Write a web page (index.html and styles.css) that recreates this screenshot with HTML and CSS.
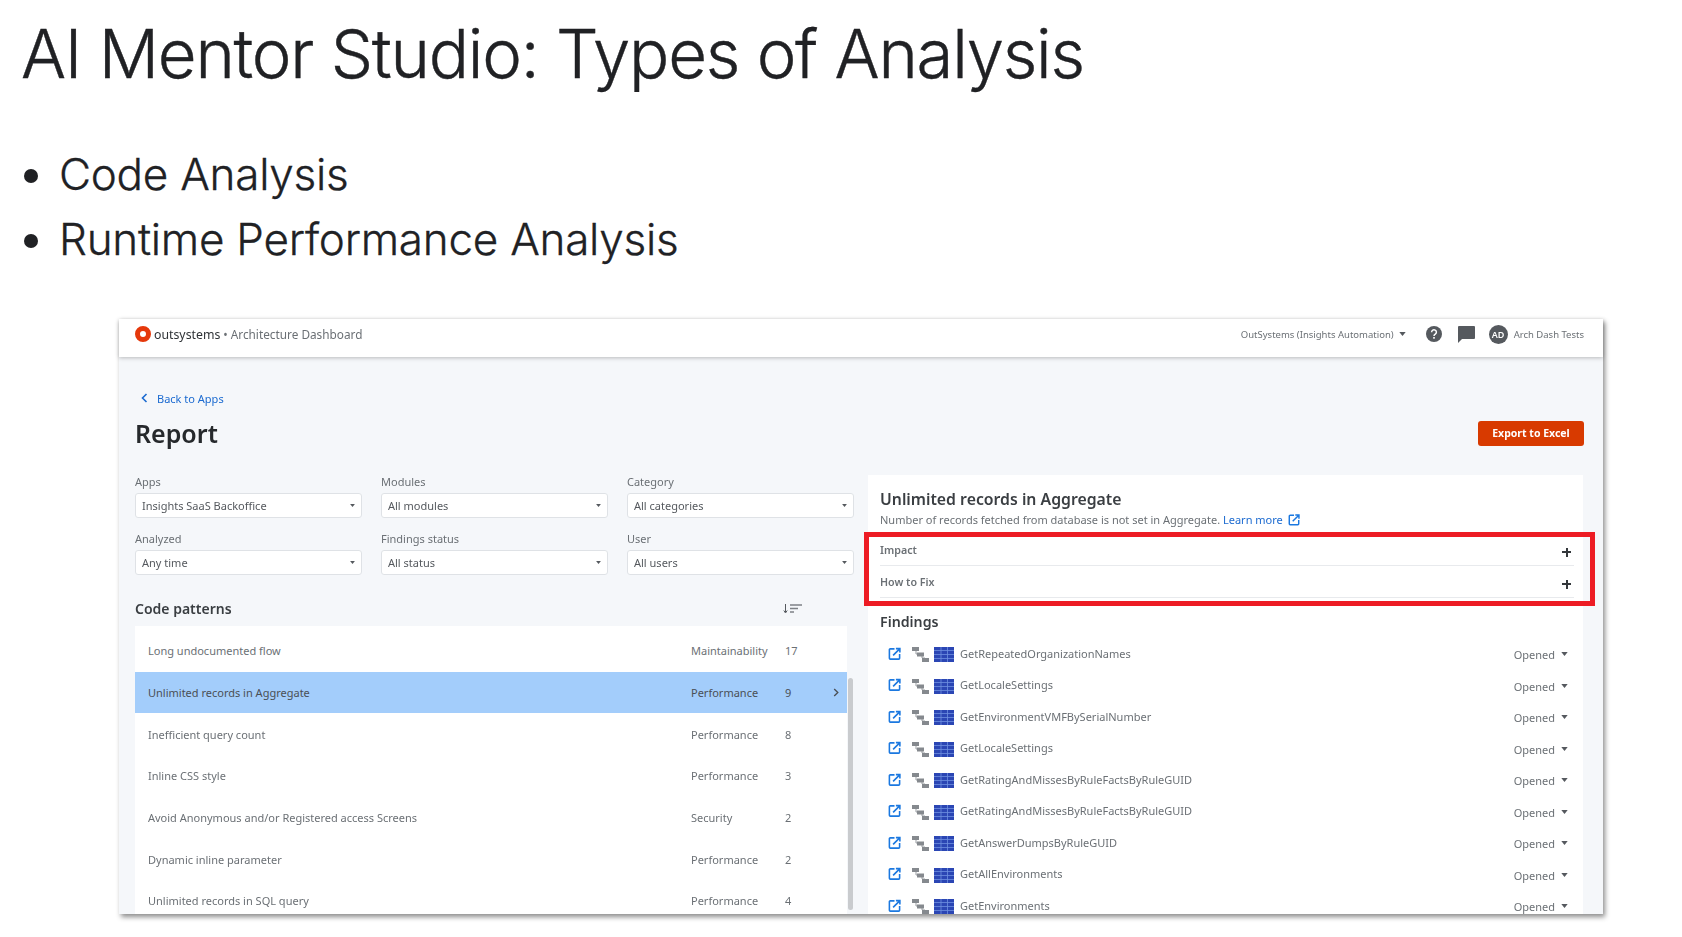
FILE: index.html
```html
<!DOCTYPE html>
<html lang="en">
<head>
  <meta charset="UTF-8">
  <title>AI Mentor Studio: Types of Analysis</title>
  <link rel="stylesheet" href="styles.css">
</head>
<body>

  <svg class="sprite" width="0" height="0">
    <symbol id="ext" viewBox="0 0 14 14">
      <path d="M7 1.500H2.500a1 1 0 0 0-1 1v9a1 1 0 0 0 1 1h9a1 1 0 0 0 1-1V7" fill="none" stroke="currentColor" stroke-width="1.700"/>
      <path d="M5.500 8.500 12 2M8.500 1.200h4.300v4.300" fill="none" stroke="currentColor" stroke-width="1.700"/>
    </symbol>
    <symbol id="tree" viewBox="0 0 17 15">
      <path d="M4 4v3h5M10 8v3h3" fill="none" stroke="#9a9ea3" stroke-width="1"/>
      <rect x="0" y="0" width="7" height="4" fill="#85898e"/>
      <rect x="5" y="5.500" width="7" height="4" fill="#85898e"/>
      <rect x="10" y="11" width="7" height="4" fill="#85898e"/>
    </symbol>
    <symbol id="table" viewBox="0 0 20 15">
      <rect width="20" height="15" fill="#2b46b4"/>
      <path d="M0 3.500h20M0 7.500h20M0 11.500h20M7 0v15M13.500 0v15" stroke="#6f8fe0" stroke-width="0.800"/>
    </symbol>
    <symbol id="caret" viewBox="0 0 8 5">
      <path d="M0 0h8L4 5z" fill="currentColor"/>
    </symbol>
  </svg>

  <header class="slide-head">
    <h1>AI Mentor Studio: Types of Analysis</h1>
    <ul>
      <li>Code Analysis</li>
      <li>Runtime Performance Analysis</li>
    </ul>
  </header>

  <section class="app">
    <div class="topbar">
      <div class="brand">
        <span class="brand-logo"></span>
        <span class="brand-name">outsystems</span>
        <span class="brand-sep">•</span>
        <span class="brand-title">Architecture Dashboard</span>
      </div>
      <div class="account">
        <span class="tenant">OutSystems (Insights Automation)</span>
        <svg class="tenant-caret"><use href="#caret"/></svg>
        <svg class="help" viewBox="0 0 16 16">
          <circle cx="8" cy="8" r="8" fill="#55595e"/>
          <path d="M5.600 6.200a2.400 2.400 0 1 1 3.700 2c-.8.500-1.300.9-1.300 1.800" fill="none" stroke="#fff" stroke-width="1.500"/>
          <rect x="7.200" y="11" width="1.600" height="1.700" fill="#fff"/>
        </svg>
        <svg class="chat" viewBox="0 0 17 17">
          <path d="M1 0h15a1 1 0 0 1 1 1v11a1 1 0 0 1-1 1H4l-4 4V1a1 1 0 0 1 1-1z" fill="#55595e"/>
        </svg>
        <span class="avatar">AD</span>
        <span class="user">Arch Dash Tests</span>
      </div>
    </div>

    <div class="content">
      <a class="back" href="#">
        <svg viewBox="0 0 7 10"><path d="M5.500 1 1.500 5l4 4" fill="none" stroke="currentColor" stroke-width="1.600"/></svg>
        Back to Apps
      </a>
      <div class="title-row">
        <h2>Report</h2>
        <button class="export" type="button">Export to Excel</button>
      </div>

      <div class="columns">
        <div class="left">
          <div class="filters">
            <div class="filter"><label>Apps</label><div class="select">Insights SaaS Backoffice<svg><use href="#caret"/></svg></div></div>
            <div class="filter"><label>Modules</label><div class="select">All modules<svg><use href="#caret"/></svg></div></div>
            <div class="filter"><label>Category</label><div class="select">All categories<svg><use href="#caret"/></svg></div></div>
            <div class="filter"><label>Analyzed</label><div class="select">Any time<svg><use href="#caret"/></svg></div></div>
            <div class="filter"><label>Findings status</label><div class="select">All status<svg><use href="#caret"/></svg></div></div>
            <div class="filter"><label>User</label><div class="select">All users<svg><use href="#caret"/></svg></div></div>
          </div>

          <div class="patterns-head">
            <h3>Code patterns</h3>
            <svg class="sort" viewBox="0 0 20 10">
              <path d="M2.500 0v8M.8 6.500 2.500 9l1.700-2.500" fill="none" stroke="#55595e" stroke-width="1"/>
              <path d="M7 1h12M7 4.500h8M7 8h4" stroke="#7d8186" stroke-width="1.400"/>
            </svg>
          </div>

          <div class="patterns">
            <div class="pattern-list">
              <div class="pattern"><span class="pattern-name">Long undocumented flow</span><span class="pattern-cat">Maintainability</span><span class="pattern-num">17</span></div>
              <div class="pattern active"><span class="pattern-name">Unlimited records in Aggregate</span><span class="pattern-cat">Performance</span><span class="pattern-num">9</span><svg viewBox="0 0 6 10"><path d="M1 1l4 4-4 4" fill="none" stroke="currentColor" stroke-width="1.500"/></svg></div>
              <div class="pattern"><span class="pattern-name">Inefficient query count</span><span class="pattern-cat">Performance</span><span class="pattern-num">8</span></div>
              <div class="pattern"><span class="pattern-name">Inline CSS style</span><span class="pattern-cat">Performance</span><span class="pattern-num">3</span></div>
              <div class="pattern"><span class="pattern-name">Avoid Anonymous and/or Registered access Screens</span><span class="pattern-cat">Security</span><span class="pattern-num">2</span></div>
              <div class="pattern"><span class="pattern-name">Dynamic inline parameter</span><span class="pattern-cat">Performance</span><span class="pattern-num">2</span></div>
              <div class="pattern"><span class="pattern-name">Unlimited records in SQL query</span><span class="pattern-cat">Performance</span><span class="pattern-num">4</span></div>
            </div>
            <div class="scrollbar"></div>
          </div>
        </div>

        <div class="card">
          <h3>Unlimited records in Aggregate</h3>
          <p class="card-sub">Number of records fetched from database is not set in Aggregate. <a href="#">Learn more</a><svg class="learn-icon"><use href="#ext"/></svg></p>

          <div class="accordion">
            <div class="accordion-row"><span>Impact</span><b class="plus"></b></div>
            <div class="accordion-row"><span>How to Fix</span><b class="plus"></b></div>
          </div>

          <h3 class="findings-title">Findings</h3>
          <div class="finding"><svg class="f-ext"><use href="#ext"/></svg><svg class="f-tree"><use href="#tree"/></svg><svg class="f-table"><use href="#table"/></svg><span class="f-name">GetRepeatedOrganizationNames</span><span class="f-status">Opened</span><svg class="f-caret"><use href="#caret"/></svg></div>
          <div class="finding"><svg class="f-ext"><use href="#ext"/></svg><svg class="f-tree"><use href="#tree"/></svg><svg class="f-table"><use href="#table"/></svg><span class="f-name">GetLocaleSettings</span><span class="f-status">Opened</span><svg class="f-caret"><use href="#caret"/></svg></div>
          <div class="finding"><svg class="f-ext"><use href="#ext"/></svg><svg class="f-tree"><use href="#tree"/></svg><svg class="f-table"><use href="#table"/></svg><span class="f-name">GetEnvironmentVMFBySerialNumber</span><span class="f-status">Opened</span><svg class="f-caret"><use href="#caret"/></svg></div>
          <div class="finding"><svg class="f-ext"><use href="#ext"/></svg><svg class="f-tree"><use href="#tree"/></svg><svg class="f-table"><use href="#table"/></svg><span class="f-name">GetLocaleSettings</span><span class="f-status">Opened</span><svg class="f-caret"><use href="#caret"/></svg></div>
          <div class="finding"><svg class="f-ext"><use href="#ext"/></svg><svg class="f-tree"><use href="#tree"/></svg><svg class="f-table"><use href="#table"/></svg><span class="f-name">GetRatingAndMissesByRuleFactsByRuleGUID</span><span class="f-status">Opened</span><svg class="f-caret"><use href="#caret"/></svg></div>
          <div class="finding"><svg class="f-ext"><use href="#ext"/></svg><svg class="f-tree"><use href="#tree"/></svg><svg class="f-table"><use href="#table"/></svg><span class="f-name">GetRatingAndMissesByRuleFactsByRuleGUID</span><span class="f-status">Opened</span><svg class="f-caret"><use href="#caret"/></svg></div>
          <div class="finding"><svg class="f-ext"><use href="#ext"/></svg><svg class="f-tree"><use href="#tree"/></svg><svg class="f-table"><use href="#table"/></svg><span class="f-name">GetAnswerDumpsByRuleGUID</span><span class="f-status">Opened</span><svg class="f-caret"><use href="#caret"/></svg></div>
          <div class="finding"><svg class="f-ext"><use href="#ext"/></svg><svg class="f-tree"><use href="#tree"/></svg><svg class="f-table"><use href="#table"/></svg><span class="f-name">GetAllEnvironments</span><span class="f-status">Opened</span><svg class="f-caret"><use href="#caret"/></svg></div>
          <div class="finding"><svg class="f-ext"><use href="#ext"/></svg><svg class="f-tree"><use href="#tree"/></svg><svg class="f-table"><use href="#table"/></svg><span class="f-name">GetEnvironments</span><span class="f-status">Opened</span><svg class="f-caret"><use href="#caret"/></svg></div>
        </div>
      </div>
    </div>

    <!-- red highlight drawn over the screenshot -->
    <div class="highlight"></div>
  </section>

</body>
</html>
```

FILE: styles.css
```css
body {
  margin: 0;
  min-height: 937px;
  background-color: white;
  font-family: "Inter", sans-serif;
  color: #202124;
}

.sprite {
  position: absolute;
}

.slide-head {
  height: 319px;
  padding-left: 21px;
  box-sizing: border-box;
}

.slide-head h1 {
  margin: 0;
  padding-top: 14px;
  font-size: 67px;
  line-height: 80px;
  font-weight: 300;
  letter-spacing: -1.25px;
  -webkit-text-stroke: 0.4px #202124;
}

.slide-head ul {
  margin: 48px 0 0;
  padding: 0 0 0 38px;
  font-size: 44px;
  font-weight: 300;
  line-height: 65px;
  letter-spacing: -0.25px;
  -webkit-text-stroke: 0.3px #202124;
}

/* app screenshot */
.app {
  position: relative;
  width: 1484px;
  height: 595px;
  margin-left: 119px;
  background-color: #f5f7fa;
  box-shadow: 2px 3px 5px rgba(0,0,0,0.45);
  font-family: "Noto Sans", sans-serif;
  font-size: 11px;
  color: #6b7075;
}

/* the screenshot is a little soft */
.topbar,
.content {
  filter: blur(0.35px);
}

.topbar {
  height: 38px;
  box-sizing: border-box;
  padding: 0 19px 8px 16px;
  display: flex;
  align-items: center;
  justify-content: space-between;
  background-color: white;
  box-shadow: 0 1px 4px rgba(0,0,0,0.25);
}

.brand {
  display: flex;
  align-items: center;
  font-size: 11.8px;
}

.brand-logo {
  width: 6px;
  height: 6px;
  border: 5px solid #e5380b;
  border-radius: 50%;
  margin-right: 3px;
  background-color: white;
}

.brand-name {
  font-size: 12.3px;
  color: #2e3236;
}

.brand-sep {
  margin: 0 3px;
}

.account {
  display: flex;
  align-items: center;
  font-size: 9.5px;
}

.tenant-caret {
  width: 7px;
  height: 4px;
  margin: 0 20px 0 5px;
  color: #55595e;
}

.help {
  width: 16px;
  height: 16px;
  margin-right: 16px;
}

.chat {
  width: 17px;
  height: 17px;
  margin-right: 14px;
}

.avatar {
  width: 19px;
  height: 19px;
  margin-right: 6px;
  border-radius: 50%;
  background-color: #55595e;
  color: white;
  font-size: 9px;
  font-weight: 600;
  text-align: center;
  line-height: 19px;
}

.content {
  height: 557px;
  padding: 0 19px 0 16px;
  overflow: hidden;
}

.back {
  display: flex;
  align-items: center;
  gap: 9px;
  margin: 32px 0 0 6px;
  height: 18px;
  color: #1b6ad0;
  text-decoration: none;
}

.back svg {
  width: 7px;
  height: 10px;
}

.title-row {
  display: flex;
  justify-content: space-between;
  align-items: center;
  height: 25px;
  margin-top: 14px;
}

.title-row h2 {
  margin: 0 0 2px;
  font-size: 25px;
  font-weight: 600;
  color: #26292c;
}

.export {
  width: 106px;
  height: 25px;
  padding: 0 0 2px;
  border: none;
  border-radius: 3px;
  background-color: #d83a00;
  color: white;
  font-family: inherit;
  font-size: 10.5px;
  font-weight: 700;
}

.columns {
  display: grid;
  grid-template-columns: 719px 715px;
  gap: 14px;
  margin-top: 29px;
}

.filters {
  display: grid;
  grid-template-columns: repeat(3, 227px);
  column-gap: 19px;
  row-gap: 14px;
}

.filter label {
  display: block;
  height: 18px;
  line-height: 14px;
}

.select {
  height: 25px;
  box-sizing: border-box;
  padding: 0 6px;
  display: flex;
  align-items: center;
  justify-content: space-between;
  background-color: white;
  border: 1px solid #dfe2e6;
  border-radius: 3px;
  color: #55595e;
}

.select svg {
  width: 5px;
  height: 3px;
  color: #55595e;
}

.patterns-head {
  display: flex;
  justify-content: space-between;
  align-items: center;
  height: 24px;
  margin-top: 22px;
  padding-right: 51px;
}

.patterns-head h3,
.card h3 {
  margin: 0;
  font-weight: 600;
  color: #3a3e42;
}

.patterns-head h3 {
  margin-bottom: 2px;
  font-size: 14px;
}

.sort {
  width: 20px;
  height: 10px;
}

.patterns {
  display: flex;
  gap: 1px;
  margin-top: 5px;
}

.pattern-list {
  width: 712px;
  padding-top: 4px;
  background-color: white;
}

.pattern {
  height: 41.7px;
  padding: 0 8px 0 13px;
  display: flex;
  align-items: center;
}

.pattern.active {
  background-color: #a3cdfb;
  color: #4a4f55;
}

.pattern svg {
  width: 6px;
  height: 9px;
}

.pattern-name {
  flex: 1;
}

.pattern-cat {
  width: 94px;
}

.pattern-num {
  width: 48px;
}

.pattern:not(.active) .pattern-num {
  margin-right: 6px;
}

.scrollbar {
  width: 5px;
  height: 232px;
  margin-top: 52px;
  border-radius: 3px;
  background-color: #c9cbce;
}

.card {
  height: 600px;
  padding: 14px 9px 0 12px;
  background-color: white;
}

.card h3 {
  font-size: 15.800px;
  line-height: 20px;
}

.card-sub {
  margin: 3px 0 0;
  line-height: 16px;
  display: flex;
  align-items: center;
  white-space: pre;
}

.card-sub a {
  color: #1b6ad0;
  text-decoration: none;
}

.learn-icon {
  width: 12px;
  height: 12px;
  margin-left: 5px;
  color: #1b78e0;
}

.accordion {
  margin-top: 6px;
}

.accordion-row {
  height: 32px;
  box-sizing: border-box;
  border-bottom: 1px solid #e8eaed;
  display: flex;
  justify-content: space-between;
  align-items: center;
  padding-right: 3px;
  font-size: 10.7px;
  font-weight: 600;
}

.plus {
  width: 9px;
  height: 9px;
  margin-top: 5px;
  background:
    linear-gradient(#33373b, #33373b) center / 9px 2px no-repeat,
    linear-gradient(#33373b, #33373b) center / 2px 9px no-repeat;
}

.card .findings-title {
  margin-top: 14px;
  font-size: 14.2px;
}

.findings-title + .finding {
  margin-top: 6px;
}

.finding {
  height: 31.5px;
  padding-left: 8px;
  display: flex;
  align-items: center;
}

.f-ext {
  width: 13px;
  height: 14px;
  color: #1b78e0;
  margin-right: 11px;
}

.f-tree {
  width: 17px;
  height: 15px;
  margin: 2px 5px 0 0;
}

.f-table {
  width: 20px;
  height: 15px;
  margin: 2px 6px 0 0;
}

.f-name {
  flex: 1;
  margin-top: -1px;
}

.f-status {
  margin-top: 2px;
}

.f-caret {
  width: 7px;
  height: 4px;
  margin: 1px 6px 0 6px;
  color: #55595e;
}

.highlight {
  position: absolute;
  left: 745px;
  top: 213px;
  width: 731px;
  height: 74px;
  box-sizing: border-box;
  border: 5px solid #ed1c24;
}
```
